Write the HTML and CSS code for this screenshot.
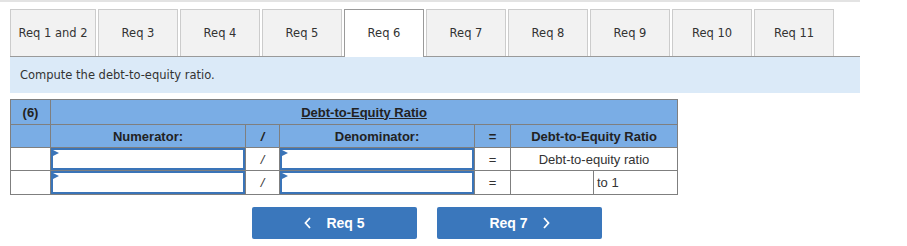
FILE: index.html
```html
<!DOCTYPE html>
<html lang="en">
<head>
    <meta charset="UTF-8">
    <title>Req 6</title>
    <link rel="stylesheet" href="styles.css">
</head>
<body>
    <div class="page">
        <div class="topbar"></div>

        <!-- requirement tabs -->
        <div class="tabs">
            <div class="tab wide">Req 1 and 2</div>
            <div class="tab">Req 3</div>
            <div class="tab">Req 4</div>
            <div class="tab">Req 5</div>
            <div class="tab active">Req 6</div>
            <div class="tab">Req 7</div>
            <div class="tab">Req 8</div>
            <div class="tab">Req 9</div>
            <div class="tab">Req 10</div>
            <div class="tab">Req 11</div>
        </div>

        <div class="prompt">Compute the debt-to-equity ratio.</div>

        <table class="ratio">
            <colgroup>
                <col style="width: 40px">
                <col style="width: 195px">
                <col style="width: 34px">
                <col style="width: 195px">
                <col style="width: 36px">
                <col style="width: 83px">
                <col style="width: 84px">
            </colgroup>
            <tr class="head head-top">
                <th>(6)</th>
                <th colspan="6"><u>Debt-to-Equity Ratio</u></th>
            </tr>
            <tr class="head">
                <th></th>
                <th>Numerator:</th>
                <th><i>/</i></th>
                <th>Denominator:</th>
                <th>=</th>
                <th colspan="2">Debt-to-Equity Ratio</th>
            </tr>
            <tr class="row">
                <td></td>
                <td class="entry"><input type="text"></td>
                <td class="op"><i>/</i></td>
                <td class="entry"><input type="text"></td>
                <td class="op">=</td>
                <td colspan="2" class="label">Debt-to-equity ratio</td>
            </tr>
            <tr class="row">
                <td></td>
                <td class="entry"><input type="text"></td>
                <td class="op"><i>/</i></td>
                <td class="entry"><input type="text"></td>
                <td class="op">=</td>
                <td></td>
                <td class="unit">to 1</td>
            </tr>
        </table>

        <div class="nav">
            <button class="nav-btn">
                <svg width="8" height="12" viewBox="0 0 8 12"><path d="M6 1 L1.5 6 L6 11" fill="none" stroke="#fff" stroke-width="1.8"/></svg>
                <span>Req 5</span>
            </button>
            <button class="nav-btn">
                <span>Req 7</span>
                <svg width="8" height="12" viewBox="0 0 8 12"><path d="M2 1 L6.5 6 L2 11" fill="none" stroke="#fff" stroke-width="1.8"/></svg>
            </button>
        </div>
    </div>
</body>
</html>
```

FILE: styles.css
```css
body {
    margin: 0;
    background: #fff;
    font-family: "DejaVu Sans", Verdana, sans-serif;
    color: #222;
}
.page {
    width: 860px;
}
.topbar {
    height: 2px;
    background: #e3e3e3;
}
.tabs {
    display: flex;
    gap: 2px;
    margin: 7px 0 0 10px;
    border-bottom: 1px solid #9a9a9a;
    height: 47px;
}
.tab {
    width: 80px;
    height: 47px;
    box-sizing: border-box;
    background: #f2f2f2;
    border: 1px solid #cccccc;
    border-bottom: none;
    display: flex;
    align-items: center;
    justify-content: center;
    font-size: 11.5px;
    color: #333;
}
.tab.wide {
    width: 86px;
}
.tab.active {
    background: #fff;
    border-color: #9a9a9a;
    height: 48px;
    padding-bottom: 1px;
    position: relative;
    z-index: 1;
}
.prompt {
    margin-left: 10px;
    height: 36px;
    background: #dbeaf8;
    padding-left: 10px;
    font-size: 11.5px;
    line-height: 36px;
    color: #333;
}
.ratio {
    margin: 6px 0 0 10px;
    border-collapse: collapse;
    table-layout: fixed;
    width: 667px;
    font-family: "Liberation Sans", Arial, sans-serif;
    font-size: 13px;
}
.ratio th, .ratio td {
    border: 1px solid #7f7f7f;
    padding: 0;
    text-align: center;
}
.head th {
    background: #7aade5;
    height: 22px;
    font-weight: bold;
    color: #222;
}
.head-top th {
    height: 24px;
}
.row td {
    height: 22px;
    background: #fff;
}
.row + .row td {
    height: 23px;
}
.entry {
    position: relative;
}
.entry input {
    display: block;
    width: 100%;
    height: 100%;
    box-sizing: border-box;
    border: 2px solid #3a74b8;
    margin: 0;
    padding: 0 4px;
    background: #fff;
}
.entry::before {
    content: "";
    position: absolute;
    left: 2px;
    top: 2px;
    border-left: 6px solid #3a74b8;
    border-top: 3px solid transparent;
    border-bottom: 3px solid transparent;
    z-index: 1;
}
.row td.entry {
    height: 22px;
}
.op {
    color: #333;
}
.label {
    color: #333;
}
.ratio td.unit {
    text-align: left;
    padding-left: 3px;
    color: #333;
}
.nav {
    display: flex;
    gap: 20px;
    padding-left: 252px;
    margin-top: 12px;
}
.nav-btn {
    width: 165px;
    height: 32px;
    background: #3a77bc;
    border: none;
    border-radius: 2px;
    color: #fff;
    font-family: "Liberation Sans", Arial, sans-serif;
    font-size: 14px;
    font-weight: bold;
    display: flex;
    align-items: center;
    justify-content: center;
    gap: 14px;
    padding: 0;
}
```
